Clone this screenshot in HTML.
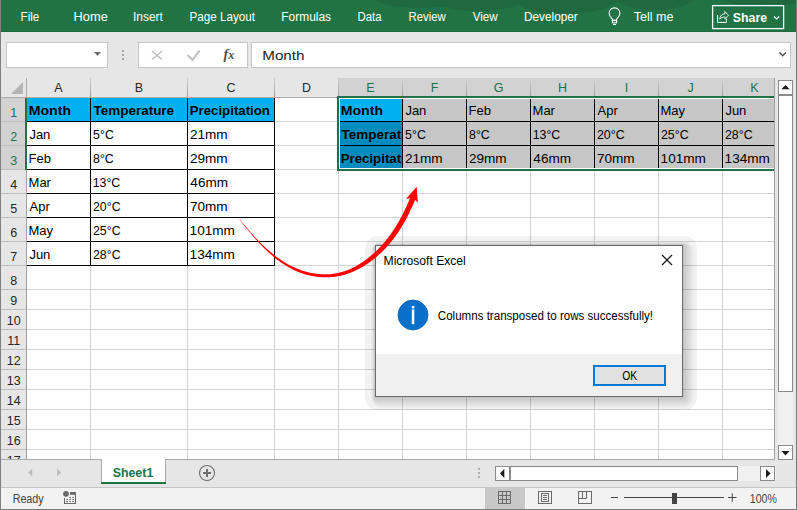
<!DOCTYPE html>
<html><head><meta charset="utf-8"><title>Excel</title>
<style>
html,body{margin:0;padding:0;background:#fff;}
body{width:797px;height:510px;overflow:hidden;}
svg{display:block;font-family:"Liberation Sans",sans-serif;}
</style></head><body>
<svg width="797" height="510" viewBox="0 0 797 510">
<rect x="0" y="0" width="797" height="32" fill="#217346"/>
<g fill="#1f6840"><ellipse cx="420" cy="-4" rx="48" ry="12"/><ellipse cx="478" cy="-6" rx="52" ry="17"/><ellipse cx="565" cy="-5" rx="55" ry="19"/><ellipse cx="655" cy="-10" rx="45" ry="20"/><ellipse cx="765" cy="-6" rx="45" ry="13"/></g>
<rect x="0" y="31" width="797" height="1" fill="#1c693e"/>
<text x="20.57" y="21" font-size="12.5" fill="#fff" textLength="18.77" lengthAdjust="spacingAndGlyphs" >File</text>
<text x="73.57" y="21" font-size="12.5" fill="#fff" textLength="34.24" lengthAdjust="spacingAndGlyphs" >Home</text>
<text x="132.92" y="21" font-size="12.5" fill="#fff" textLength="29.95" lengthAdjust="spacingAndGlyphs" >Insert</text>
<text x="189.47" y="21" font-size="12.5" fill="#fff" textLength="65.6" lengthAdjust="spacingAndGlyphs" >Page Layout</text>
<text x="281.35" y="21" font-size="12.5" fill="#fff" textLength="49.64" lengthAdjust="spacingAndGlyphs" >Formulas</text>
<text x="357.49" y="21" font-size="12.5" fill="#fff" textLength="24.14" lengthAdjust="spacingAndGlyphs" >Data</text>
<text x="408.59" y="21" font-size="12.5" fill="#fff" textLength="37.2" lengthAdjust="spacingAndGlyphs" >Review</text>
<text x="472.64" y="21" font-size="12.5" fill="#fff" textLength="25.05" lengthAdjust="spacingAndGlyphs" >View</text>
<text x="524.06" y="21" font-size="12.5" fill="#fff" textLength="53.76" lengthAdjust="spacingAndGlyphs" >Developer</text>
<text x="633.75" y="21" font-size="12.5" fill="#fff" textLength="39.65" lengthAdjust="spacingAndGlyphs" >Tell me</text>
<g fill="none" stroke="#fff" stroke-width="1.1"><path d="M612.4 20.4 L612.4 19.2 Q609.1 16.2 609.1 13.3 A5.4 5.4 0 0 1 619.9 13.3 Q619.9 16.2 616.6 19.2 L616.6 20.4 Z"/><rect x="612.4" y="20.4" width="4.2" height="2.4"/><path d="M613 24.5 H616"/></g>
<rect x="712.6" y="5.6" width="71" height="23" fill="none" stroke="#fff" stroke-width="1.3"/>
<g fill="none" stroke="#fff" stroke-width="1"><path d="M717.6 15 V22.4 H726.4 V18.4"/><path stroke-width="0.85" stroke-linejoin="round" d="M719.7 19.2 C719.9 15.9 722 13.9 725 13.7 L724.7 11.5 L728.5 15.2 L724.9 18.9 L725 17 C722.9 17 721.1 17.7 719.7 19.2 Z"/></g>
<text x="732.83" y="21.5" font-size="13" fill="#fff" font-weight="bold" textLength="34.19" lengthAdjust="spacingAndGlyphs" >Share</text>
<path d="M774 16.5 L776.6 19 L779.2 16.5" fill="none" stroke="#fff" stroke-width="1.1"/>
<rect x="0" y="32" width="797" height="46" fill="#e6e6e6"/>
<rect x="6.5" y="42.5" width="101" height="25" fill="#fff" stroke="#c6c6c6"/>
<path d="M94 52 H101 L97.5 56 Z" fill="#6b6b6b"/>
<rect x="122" y="50" width="2" height="2" fill="#a6a6a6"/>
<rect x="122" y="54" width="2" height="2" fill="#a6a6a6"/>
<rect x="122" y="58" width="2" height="2" fill="#a6a6a6"/>
<rect x="138.5" y="42.5" width="109" height="25" fill="#fff" stroke="#c6c6c6"/>
<path d="M152 51 L162 59.5 M162 51 L152 59.5" stroke="#bdbdbd" stroke-width="1.6"/>
<path d="M187.5 55 L192.5 59.8 L199.5 50.5" fill="none" stroke="#c2c2c2" stroke-width="2.1"/>
<text x="223.5" y="59" font-family="Liberation Serif" font-style="italic" font-weight="bold" font-size="14" fill="#505050">f</text>
<text x="228.3" y="59" font-family="Liberation Serif" font-style="italic" font-weight="bold" font-size="12" fill="#505050">x</text>
<rect x="251.5" y="42.5" width="539" height="25" fill="#fff" stroke="#c6c6c6"/>
<text x="262.29" y="60" font-size="13" fill="#222" textLength="42.19" lengthAdjust="spacingAndGlyphs" >Month</text>
<path d="M779.5 52.5 L782.7 55.7 L785.9 52.5" fill="none" stroke="#555" stroke-width="1.5"/>
<rect x="0" y="78" width="775" height="20" fill="#e6e6e6"/>
<rect x="339" y="78" width="436" height="20" fill="#d2d2d2"/>
<rect x="0" y="98" width="27" height="361" fill="#e6e6e6"/>
<rect x="0" y="98" width="26" height="72" fill="#d2d2d2"/>
<rect x="27" y="98" width="748" height="361" fill="#fff"/>
<rect x="90" y="98" width="1" height="361" fill="#d4d4d4"/><rect x="187" y="98" width="1" height="361" fill="#d4d4d4"/><rect x="274" y="98" width="1" height="361" fill="#d4d4d4"/><rect x="338" y="98" width="1" height="361" fill="#d4d4d4"/><rect x="402" y="98" width="1" height="361" fill="#d4d4d4"/><rect x="466" y="98" width="1" height="361" fill="#d4d4d4"/><rect x="530" y="98" width="1" height="361" fill="#d4d4d4"/><rect x="594" y="98" width="1" height="361" fill="#d4d4d4"/><rect x="658" y="98" width="1" height="361" fill="#d4d4d4"/><rect x="722" y="98" width="1" height="361" fill="#d4d4d4"/><rect x="27" y="121" width="747" height="1" fill="#d4d4d4"/><rect x="27" y="145" width="747" height="1" fill="#d4d4d4"/><rect x="27" y="169" width="747" height="1" fill="#d4d4d4"/><rect x="27" y="193" width="747" height="1" fill="#d4d4d4"/><rect x="27" y="217" width="747" height="1" fill="#d4d4d4"/><rect x="27" y="241" width="747" height="1" fill="#d4d4d4"/><rect x="27" y="265" width="747" height="1" fill="#d4d4d4"/><rect x="27" y="289" width="747" height="1" fill="#d4d4d4"/><rect x="27" y="309" width="747" height="1" fill="#d4d4d4"/><rect x="27" y="329" width="747" height="1" fill="#d4d4d4"/><rect x="27" y="349" width="747" height="1" fill="#d4d4d4"/><rect x="27" y="369" width="747" height="1" fill="#d4d4d4"/><rect x="27" y="389" width="747" height="1" fill="#d4d4d4"/><rect x="27" y="409" width="747" height="1" fill="#d4d4d4"/><rect x="27" y="429" width="747" height="1" fill="#d4d4d4"/><rect x="27" y="449" width="747" height="1" fill="#d4d4d4"/>
<defs><linearGradient id="hsep" x1="0" y1="0" x2="0" y2="1"><stop offset="0" stop-color="#d0d0d0"/><stop offset="1" stop-color="#9c9c9c"/></linearGradient></defs>
<rect x="90" y="78" width="1" height="19" fill="url(#hsep)"/><rect x="187" y="78" width="1" height="19" fill="url(#hsep)"/><rect x="274" y="78" width="1" height="19" fill="url(#hsep)"/><rect x="338" y="78" width="1" height="19" fill="url(#hsep)"/><rect x="402" y="78" width="1" height="19" fill="url(#hsep)"/><rect x="466" y="78" width="1" height="19" fill="url(#hsep)"/><rect x="530" y="78" width="1" height="19" fill="url(#hsep)"/><rect x="594" y="78" width="1" height="19" fill="url(#hsep)"/><rect x="658" y="78" width="1" height="19" fill="url(#hsep)"/><rect x="722" y="78" width="1" height="19" fill="url(#hsep)"/><rect x="0" y="121" width="26" height="1" fill="#bfbfbf"/><rect x="0" y="145" width="26" height="1" fill="#bfbfbf"/><rect x="0" y="169" width="26" height="1" fill="#bfbfbf"/><rect x="0" y="193" width="26" height="1" fill="#bfbfbf"/><rect x="0" y="217" width="26" height="1" fill="#bfbfbf"/><rect x="0" y="241" width="26" height="1" fill="#bfbfbf"/><rect x="0" y="265" width="26" height="1" fill="#bfbfbf"/><rect x="0" y="289" width="26" height="1" fill="#bfbfbf"/><rect x="0" y="309" width="26" height="1" fill="#bfbfbf"/><rect x="0" y="329" width="26" height="1" fill="#bfbfbf"/><rect x="0" y="349" width="26" height="1" fill="#bfbfbf"/><rect x="0" y="369" width="26" height="1" fill="#bfbfbf"/><rect x="0" y="389" width="26" height="1" fill="#bfbfbf"/><rect x="0" y="409" width="26" height="1" fill="#bfbfbf"/><rect x="0" y="429" width="26" height="1" fill="#bfbfbf"/><rect x="0" y="449" width="26" height="1" fill="#bfbfbf"/>
<rect x="0" y="97" width="775" height="1" fill="#ababab"/>
<rect x="26" y="78" width="1" height="381" fill="#ababab"/>
<path d="M11 94 L23 94 L23 82 Z" fill="#b4b4b4"/>
<text x="58.5" y="92" font-size="12.5" fill="#262626" text-anchor="middle" >A</text>
<text x="139.0" y="92" font-size="12.5" fill="#262626" text-anchor="middle" >B</text>
<text x="231.0" y="92" font-size="12.5" fill="#262626" text-anchor="middle" >C</text>
<text x="306.5" y="92" font-size="12.5" fill="#262626" text-anchor="middle" >D</text>
<text x="370.5" y="92" font-size="12.5" fill="#217346" text-anchor="middle" >E</text>
<text x="434.5" y="92" font-size="12.5" fill="#217346" text-anchor="middle" >F</text>
<text x="498.5" y="92" font-size="12.5" fill="#217346" text-anchor="middle" >G</text>
<text x="562.5" y="92" font-size="12.5" fill="#217346" text-anchor="middle" >H</text>
<text x="626.5" y="92" font-size="12.5" fill="#217346" text-anchor="middle" >I</text>
<text x="690.5" y="92" font-size="12.5" fill="#217346" text-anchor="middle" >J</text>
<text x="754.5" y="92" font-size="12.5" fill="#217346" text-anchor="middle" >K</text>
<text x="13.8" y="117" font-size="12.5" fill="#217346" text-anchor="middle" >1</text>
<text x="13.8" y="141" font-size="12.5" fill="#217346" text-anchor="middle" >2</text>
<text x="13.8" y="165" font-size="12.5" fill="#217346" text-anchor="middle" >3</text>
<text x="13.8" y="189" font-size="12.5" fill="#262626" text-anchor="middle" >4</text>
<text x="13.8" y="213" font-size="12.5" fill="#262626" text-anchor="middle" >5</text>
<text x="13.8" y="237" font-size="12.5" fill="#262626" text-anchor="middle" >6</text>
<text x="13.8" y="261" font-size="12.5" fill="#262626" text-anchor="middle" >7</text>
<text x="13.8" y="285" font-size="12.5" fill="#262626" text-anchor="middle" >8</text>
<text x="13.8" y="305" font-size="12.5" fill="#262626" text-anchor="middle" >9</text>
<text x="13.8" y="325" font-size="12.5" fill="#262626" text-anchor="middle" >10</text>
<text x="13.8" y="345" font-size="12.5" fill="#262626" text-anchor="middle" >11</text>
<text x="13.8" y="365" font-size="12.5" fill="#262626" text-anchor="middle" >12</text>
<text x="13.8" y="385" font-size="12.5" fill="#262626" text-anchor="middle" >13</text>
<text x="13.8" y="405" font-size="12.5" fill="#262626" text-anchor="middle" >14</text>
<text x="13.8" y="425" font-size="12.5" fill="#262626" text-anchor="middle" >15</text>
<text x="13.8" y="445" font-size="12.5" fill="#262626" text-anchor="middle" >16</text>
<text x="13.8" y="465" font-size="12.5" fill="#262626" text-anchor="middle" >17</text>
<rect x="27" y="98" width="248" height="24" fill="#00b0f0"/>
<rect x="90" y="98" width="1" height="168" fill="#000"/><rect x="187" y="98" width="1" height="168" fill="#000"/><rect x="274" y="98" width="1" height="168" fill="#000"/><rect x="27" y="121" width="248" height="1" fill="#000"/><rect x="27" y="145" width="248" height="1" fill="#000"/><rect x="27" y="169" width="248" height="1" fill="#000"/><rect x="27" y="193" width="248" height="1" fill="#000"/><rect x="27" y="217" width="248" height="1" fill="#000"/><rect x="27" y="241" width="248" height="1" fill="#000"/><rect x="27" y="265" width="248" height="1" fill="#000"/>
<rect x="26" y="170" width="1" height="289" fill="#a0a0a0"/>
<text x="28.68" y="115" font-size="13" fill="#000" font-weight="bold" textLength="42.35" lengthAdjust="spacingAndGlyphs" >Month</text>
<text x="93.47" y="115" font-size="13" fill="#000" font-weight="bold" textLength="80.65" lengthAdjust="spacingAndGlyphs" >Temperature</text>
<text x="189.74" y="115" font-size="13" fill="#000" font-weight="bold" textLength="80.18" lengthAdjust="spacingAndGlyphs" >Precipitation</text>
<text x="29.4" y="139" font-size="13" fill="#000" textLength="20.96" lengthAdjust="spacingAndGlyphs" >Jan</text>
<text x="93.11" y="139" font-size="13" fill="#000" textLength="20.73" lengthAdjust="spacingAndGlyphs" >5°C</text>
<text x="189.92" y="139" font-size="13" fill="#000" textLength="37.75" lengthAdjust="spacingAndGlyphs" >21mm</text>
<text x="28.56" y="163" font-size="13" fill="#000" textLength="22.4" lengthAdjust="spacingAndGlyphs" >Feb</text>
<text x="93.04" y="163" font-size="13" fill="#000" textLength="20.73" lengthAdjust="spacingAndGlyphs" >8°C</text>
<text x="189.92" y="163" font-size="13" fill="#000" textLength="37.75" lengthAdjust="spacingAndGlyphs" >29mm</text>
<text x="28.56" y="187" font-size="13" fill="#000" textLength="22.39" lengthAdjust="spacingAndGlyphs" >Mar</text>
<text x="92.67" y="187" font-size="13" fill="#000" textLength="27.6" lengthAdjust="spacingAndGlyphs" >13°C</text>
<text x="190.33" y="187" font-size="13" fill="#000" textLength="37.75" lengthAdjust="spacingAndGlyphs" >46mm</text>
<text x="29.6" y="211" font-size="13" fill="#000" textLength="20.23" lengthAdjust="spacingAndGlyphs" >Apr</text>
<text x="92.98" y="211" font-size="13" fill="#000" textLength="27.6" lengthAdjust="spacingAndGlyphs" >20°C</text>
<text x="189.92" y="211" font-size="13" fill="#000" textLength="37.75" lengthAdjust="spacingAndGlyphs" >70mm</text>
<text x="28.56" y="235" font-size="13" fill="#000" textLength="24.56" lengthAdjust="spacingAndGlyphs" >May</text>
<text x="92.98" y="235" font-size="13" fill="#000" textLength="27.6" lengthAdjust="spacingAndGlyphs" >25°C</text>
<text x="189.58" y="235" font-size="13" fill="#000" textLength="45.3" lengthAdjust="spacingAndGlyphs" >101mm</text>
<text x="29.4" y="259" font-size="13" fill="#000" textLength="20.96" lengthAdjust="spacingAndGlyphs" >Jun</text>
<text x="92.98" y="259" font-size="13" fill="#000" textLength="27.6" lengthAdjust="spacingAndGlyphs" >28°C</text>
<text x="189.58" y="259" font-size="13" fill="#000" textLength="45.3" lengthAdjust="spacingAndGlyphs" >134mm</text>
<rect x="339" y="98" width="436" height="72" fill="#c6c6c6"/>
<rect x="339" y="98" width="64" height="24" fill="#00b0f0"/>
<rect x="339" y="122" width="64" height="48" fill="#008bbf"/>
<rect x="338" y="97" width="1" height="73" fill="#000"/><rect x="402" y="97" width="1" height="73" fill="#000"/><rect x="466" y="97" width="1" height="73" fill="#000"/><rect x="530" y="97" width="1" height="73" fill="#000"/><rect x="594" y="97" width="1" height="73" fill="#000"/><rect x="658" y="97" width="1" height="73" fill="#000"/><rect x="722" y="97" width="1" height="73" fill="#000"/><rect x="338" y="97" width="437" height="1" fill="#000"/><rect x="338" y="121" width="437" height="1" fill="#000"/><rect x="338" y="145" width="437" height="1" fill="#000"/><rect x="338" y="169" width="437" height="1" fill="#000"/>
<defs><clipPath id="ce"><rect x="339" y="98" width="63" height="72"/></clipPath></defs>
<g clip-path="url(#ce)">
<text x="340.68" y="115" font-size="13" fill="#000" font-weight="bold" textLength="42.35" lengthAdjust="spacingAndGlyphs" >Month</text>
</g>
<text x="405.4" y="115" font-size="13" fill="#000" textLength="20.96" lengthAdjust="spacingAndGlyphs" >Jan</text>
<text x="468.56" y="115" font-size="13" fill="#000" textLength="22.4" lengthAdjust="spacingAndGlyphs" >Feb</text>
<text x="532.56" y="115" font-size="13" fill="#000" textLength="22.39" lengthAdjust="spacingAndGlyphs" >Mar</text>
<text x="597.6" y="115" font-size="13" fill="#000" textLength="20.23" lengthAdjust="spacingAndGlyphs" >Apr</text>
<text x="660.56" y="115" font-size="13" fill="#000" textLength="24.56" lengthAdjust="spacingAndGlyphs" >May</text>
<text x="725.4" y="115" font-size="13" fill="#000" textLength="20.96" lengthAdjust="spacingAndGlyphs" >Jun</text>
<g clip-path="url(#ce)">
<text x="341.47" y="139" font-size="13" fill="#000" font-weight="bold" textLength="80.65" lengthAdjust="spacingAndGlyphs" >Temperature</text>
</g>
<text x="405.11" y="139" font-size="13" fill="#000" textLength="20.73" lengthAdjust="spacingAndGlyphs" >5°C</text>
<text x="469.04" y="139" font-size="13" fill="#000" textLength="20.73" lengthAdjust="spacingAndGlyphs" >8°C</text>
<text x="532.67" y="139" font-size="13" fill="#000" textLength="27.6" lengthAdjust="spacingAndGlyphs" >13°C</text>
<text x="596.98" y="139" font-size="13" fill="#000" textLength="27.6" lengthAdjust="spacingAndGlyphs" >20°C</text>
<text x="660.98" y="139" font-size="13" fill="#000" textLength="27.6" lengthAdjust="spacingAndGlyphs" >25°C</text>
<text x="724.98" y="139" font-size="13" fill="#000" textLength="27.6" lengthAdjust="spacingAndGlyphs" >28°C</text>
<g clip-path="url(#ce)">
<text x="340.74" y="163" font-size="13" fill="#000" font-weight="bold" textLength="80.18" lengthAdjust="spacingAndGlyphs" >Precipitation</text>
</g>
<text x="404.92" y="163" font-size="13" fill="#000" textLength="37.75" lengthAdjust="spacingAndGlyphs" >21mm</text>
<text x="468.92" y="163" font-size="13" fill="#000" textLength="37.75" lengthAdjust="spacingAndGlyphs" >29mm</text>
<text x="533.33" y="163" font-size="13" fill="#000" textLength="37.75" lengthAdjust="spacingAndGlyphs" >46mm</text>
<text x="596.92" y="163" font-size="13" fill="#000" textLength="37.75" lengthAdjust="spacingAndGlyphs" >70mm</text>
<text x="660.58" y="163" font-size="13" fill="#000" textLength="45.3" lengthAdjust="spacingAndGlyphs" >101mm</text>
<text x="724.58" y="163" font-size="13" fill="#000" textLength="45.3" lengthAdjust="spacingAndGlyphs" >134mm</text>
<rect x="337" y="96" width="438" height="2" fill="#217346"/>
<rect x="337" y="169" width="438" height="2" fill="#217346"/>
<rect x="337" y="96" width="2" height="75" fill="#217346"/>
<rect x="339" y="98" width="436" height="1" fill="#fff"/>
<rect x="339" y="168" width="436" height="1" fill="#fff"/>
<rect x="339" y="98" width="1" height="71" fill="#fff"/>
<rect x="25" y="98" width="2" height="72" fill="#217346"/>
<rect x="774" y="78" width="1" height="381" fill="#a0a0a0"/>
<rect x="775" y="78" width="22" height="382" fill="#e6e6e6"/>
<rect x="778" y="95" width="15" height="350" fill="#f0f0f0"/>
<rect x="778.5" y="80.5" width="14" height="14" fill="#fff" stroke="#8a8a8a"/>
<path d="M781.3 89.3 H789.7 L785.5 85 Z" fill="#1a1a1a"/>
<rect x="778.5" y="95.5" width="14" height="296" fill="#fff" stroke="#8a8a8a"/>
<rect x="778.5" y="445.5" width="14" height="14" fill="#fff" stroke="#8a8a8a"/>
<path d="M781.5 451 H789.5 L785.5 455.5 Z" fill="#1a1a1a"/>
<rect x="0" y="459" width="775" height="1" fill="#ababab"/>
<rect x="0" y="460" width="797" height="27" fill="#e6e6e6"/>
<path d="M32.2 468.8 L28 472.5 L32.2 476.2 Z" fill="#bdbdbd"/>
<path d="M57 468.8 L61.2 472.5 L57 476.2 Z" fill="#bdbdbd"/>
<rect x="101" y="459" width="65" height="25" fill="#fff"/>
<rect x="101" y="459" width="1" height="25" fill="#ababab"/>
<rect x="165" y="459" width="1" height="25" fill="#ababab"/>
<rect x="101" y="482" width="65" height="2" fill="#217346"/>
<text x="112.63" y="477" font-size="13" fill="#217346" font-weight="bold" textLength="40.68" lengthAdjust="spacingAndGlyphs" >Sheet1</text>
<circle cx="207" cy="473" r="7.5" fill="none" stroke="#6e6e6e" stroke-width="1.1"/>
<rect x="203" y="472" width="8" height="2" fill="#6e6e6e"/><rect x="206" y="469" width="2" height="8" fill="#6e6e6e"/>
<rect x="478" y="468" width="2" height="2" fill="#b0b0b0"/>
<rect x="478" y="472" width="2" height="2" fill="#b0b0b0"/>
<rect x="478" y="476" width="2" height="2" fill="#b0b0b0"/>
<rect x="495" y="466" width="281" height="15" fill="#f0f0f0"/>
<rect x="495.5" y="466.5" width="14" height="14" fill="#fff" stroke="#8a8a8a"/>
<path d="M504.3 469 L500 473.5 L504.3 478 Z" fill="#1a1a1a"/>
<rect x="510.5" y="466.5" width="227" height="14" fill="#fff" stroke="#8a8a8a"/>
<rect x="760.5" y="466.5" width="14" height="14" fill="#fff" stroke="#8a8a8a"/>
<path d="M766 469 L770.5 473.5 L766 478 Z" fill="#1a1a1a"/>
<rect x="0" y="487" width="797" height="23" fill="#f2f2f2"/>
<rect x="0" y="487" width="797" height="1" fill="#c6c6c6"/>
<rect x="0" y="509" width="797" height="1" fill="#7a7a7a"/>
<text x="12.64" y="503" font-size="12" fill="#444" textLength="31.07" lengthAdjust="spacingAndGlyphs" >Ready</text>
<g fill="#6a6a6a"><circle cx="66" cy="493.8" r="2.9"/><rect x="70" y="492" width="6" height="2.8"/><rect x="75" y="492" width="1" height="12"/><rect x="64" y="498" width="1" height="6"/><rect x="64" y="503" width="12" height="1"/><rect x="69.3" y="497" width="1.6" height="1"/><rect x="72.3" y="497" width="1.6" height="1"/><rect x="66.3" y="499" width="1.6" height="1"/><rect x="69.3" y="499" width="1.6" height="1"/><rect x="72.3" y="499" width="1.6" height="1"/><rect x="66.3" y="501" width="1.6" height="1"/><rect x="69.3" y="501" width="1.6" height="1"/><rect x="72.3" y="501" width="1.6" height="1"/></g>
<rect x="485" y="488" width="40" height="21" fill="#c8c8c8"/>
<g fill="none" stroke="#6a6a6a" stroke-width="1"><rect x="498.5" y="491.5" width="12" height="12"/><path d="M502.5 491.5V503.5M506.5 491.5V503.5M498.5 495.5H510.5M498.5 499.5H510.5"/><rect x="538.5" y="491.5" width="13" height="12"/><rect x="541.5" y="493.5" width="7" height="8"/><path d="M543 495.5H547M543 497.5H547M543 499.5H547"/><rect x="578.5" y="491.5" width="13" height="12"/><path d="M578.5 498.5 H586.5 V491.5 M582.5 491.5 V498.5"/></g>
<rect x="611" y="497" width="7" height="1" fill="#444"/>
<rect x="624" y="497" width="100" height="1" fill="#444"/>
<rect x="672" y="493" width="5" height="11" fill="#444"/>
<path d="M728 497.5 H736.5 M732.25 493.25 V501.75" stroke="#444" stroke-width="1"/>
<text x="749.81" y="503" font-size="12" fill="#444" textLength="27.04" lengthAdjust="spacingAndGlyphs" >100%</text>
<rect x="796" y="0" width="1" height="510" fill="#777"/>
<rect x="0" y="0" width="1" height="510" fill="#808080"/>
<g><rect x="365" y="236" width="332" height="174" rx="13" fill="#000" fill-opacity="0.05"/><rect x="371.15" y="241.70" width="322.85" height="166.30" rx="9.9" fill="#000" fill-opacity="0.014"/><rect x="371.50" y="242.00" width="321.50" height="165.00" rx="9.0" fill="#000" fill-opacity="0.014"/><rect x="371.85" y="242.30" width="320.15" height="163.70" rx="8.1" fill="#000" fill-opacity="0.014"/><rect x="372.20" y="242.60" width="318.80" height="162.40" rx="7.2" fill="#000" fill-opacity="0.014"/><rect x="372.55" y="242.90" width="317.45" height="161.10" rx="6.3" fill="#000" fill-opacity="0.014"/><rect x="372.90" y="243.20" width="316.10" height="159.80" rx="5.4" fill="#000" fill-opacity="0.014"/><rect x="373.25" y="243.50" width="314.75" height="158.50" rx="4.5" fill="#000" fill-opacity="0.014"/><rect x="373.60" y="243.80" width="313.40" height="157.20" rx="3.6" fill="#000" fill-opacity="0.014"/><rect x="373.95" y="244.10" width="312.05" height="155.90" rx="2.7" fill="#000" fill-opacity="0.014"/><rect x="374.30" y="244.40" width="310.70" height="154.60" rx="1.8" fill="#000" fill-opacity="0.014"/><rect x="374.65" y="244.70" width="309.35" height="153.30" rx="0.9" fill="#000" fill-opacity="0.014"/></g>
<rect x="375.5" y="245.5" width="307" height="151" fill="#fff" stroke="#6a6a6a"/>
<rect x="376" y="354" width="306" height="42" fill="#f0f0f0"/>
<text x="383.53" y="264.7" font-size="12" fill="#000" textLength="82.31" lengthAdjust="spacingAndGlyphs" >Microsoft Excel</text>
<path d="M662 255 L672 265 M672 255 L662 265" stroke="#111" stroke-width="1.1"/>
<circle cx="413" cy="315" r="15" fill="#0a6fc8" stroke="#0b5fae" stroke-width="0.8"/>
<rect x="411.8" y="306" width="2.5" height="2.4" fill="#fff"/><rect x="411.8" y="309.5" width="2.5" height="14.7" fill="#fff"/>
<text x="437.82" y="320.3" font-size="12" fill="#000" textLength="215.26" lengthAdjust="spacingAndGlyphs" >Columns transposed to rows successfully!</text>
<rect x="594" y="366" width="71" height="19" fill="#e1e1e1" stroke="#0078d7" stroke-width="2"/>
<text x="622.13" y="380" font-size="12" fill="#000" textLength="14.97" lengthAdjust="spacingAndGlyphs" >OK</text>
<polygon points="239.55,219.54 240.67,220.99 241.80,222.45 242.95,223.93 244.11,225.41 245.29,226.89 246.49,228.38 247.70,229.87 248.92,231.36 250.16,232.85 251.42,234.34 252.69,235.83 253.98,237.31 255.28,238.79 256.61,240.26 257.94,241.72 259.29,243.18 260.66,244.63 262.04,246.06 263.44,247.48 264.86,248.88 266.30,250.27 267.75,251.64 269.22,252.99 270.71,254.32 272.22,255.62 273.74,256.91 275.29,258.16 276.86,259.39 278.44,260.59 280.05,261.76 281.68,262.90 283.32,264.00 284.99,265.08 286.67,266.11 288.38,267.12 290.10,268.08 291.85,269.00 293.62,269.89 295.41,270.72 297.23,271.50 299.06,272.23 300.92,272.91 302.79,273.55 304.67,274.14 306.57,274.69 308.48,275.18 310.40,275.63 312.33,276.02 314.26,276.36 316.21,276.66 318.16,276.90 320.12,277.09 322.07,277.22 324.04,277.30 326.00,277.32 327.96,277.30 329.92,277.22 331.88,277.08 333.84,276.89 335.79,276.63 337.74,276.32 339.68,275.95 341.61,275.51 343.52,275.01 345.43,274.46 347.32,273.84 349.20,273.17 351.06,272.45 352.91,271.69 354.75,270.88 356.56,270.02 358.36,269.11 360.14,268.16 361.90,267.17 363.63,266.14 365.35,265.07 367.04,263.96 368.71,262.82 370.35,261.65 371.97,260.45 373.56,259.22 375.13,257.96 376.68,256.67 378.20,255.35 379.69,254.01 381.16,252.64 382.59,251.25 384.00,249.83 385.39,248.38 386.75,246.92 388.08,245.43 389.38,243.93 390.66,242.40 391.91,240.86 393.14,239.30 394.34,237.72 395.51,236.13 396.66,234.52 397.78,232.90 398.88,231.26 399.96,229.61 401.00,227.93 402.02,226.25 403.02,224.55 404.00,222.85 404.96,221.13 405.91,219.40 406.83,217.66 407.73,215.91 408.62,214.15 409.49,212.38 410.34,210.61 411.18,208.82 412.00,207.03 412.81,205.23 413.61,203.43 414.39,201.62 415.16,199.80 415.92,197.98 416.66,196.16 411.75,194.17 411.02,195.97 410.28,197.76 409.53,199.55 408.76,201.32 407.99,203.09 407.20,204.86 406.40,206.61 405.59,208.35 404.76,210.09 403.91,211.82 403.06,213.53 402.18,215.24 401.29,216.93 400.38,218.61 399.45,220.28 398.51,221.94 397.55,223.58 396.56,225.21 395.56,226.83 394.55,228.44 393.51,230.04 392.46,231.62 391.38,233.18 390.27,234.74 389.15,236.27 388.00,237.79 386.82,239.29 385.62,240.78 384.39,242.25 383.14,243.70 381.87,245.13 380.57,246.54 379.24,247.93 377.89,249.30 376.53,250.65 375.13,251.98 373.71,253.29 372.27,254.57 370.80,255.82 369.31,257.05 367.80,258.25 366.26,259.42 364.69,260.57 363.11,261.68 361.50,262.76 359.87,263.80 358.22,264.81 356.56,265.77 354.87,266.70 353.17,267.58 351.45,268.42 349.71,269.20 347.95,269.93 346.18,270.61 344.40,271.22 342.60,271.79 340.79,272.30 338.97,272.75 337.14,273.14 335.30,273.48 333.45,273.76 331.59,273.98 329.72,274.15 327.85,274.27 325.98,274.33 324.10,274.33 322.22,274.28 320.34,274.17 318.46,274.02 316.58,273.81 314.71,273.55 312.84,273.25 310.98,272.89 309.12,272.48 307.27,272.03 305.44,271.53 303.61,270.98 301.80,270.39 300.00,269.75 298.22,269.06 296.45,268.33 294.69,267.57 292.95,266.78 291.22,265.94 289.51,265.06 287.82,264.14 286.14,263.18 284.48,262.19 282.83,261.15 281.20,260.09 279.59,258.99 277.99,257.86 276.41,256.70 274.85,255.52 273.30,254.31 271.77,253.07 270.25,251.81 268.74,250.53 267.26,249.22 265.79,247.90 264.34,246.55 262.90,245.19 261.48,243.82 260.07,242.42 258.68,241.02 257.31,239.60 255.96,238.17 254.62,236.73 253.30,235.29 252.00,233.84 250.71,232.38 249.43,230.93 248.17,229.47 246.93,228.01 245.70,226.55 244.49,225.10 243.29,223.65 242.11,222.21 240.94,220.77 239.79,219.35" fill="#ff0000"/>
<path d="M416.7 186.7 L406.1 198.7 L410 198.2 L415.5 200 L417.8 203.1 Z" fill="#ff0000"/>
</svg>
</body></html>
